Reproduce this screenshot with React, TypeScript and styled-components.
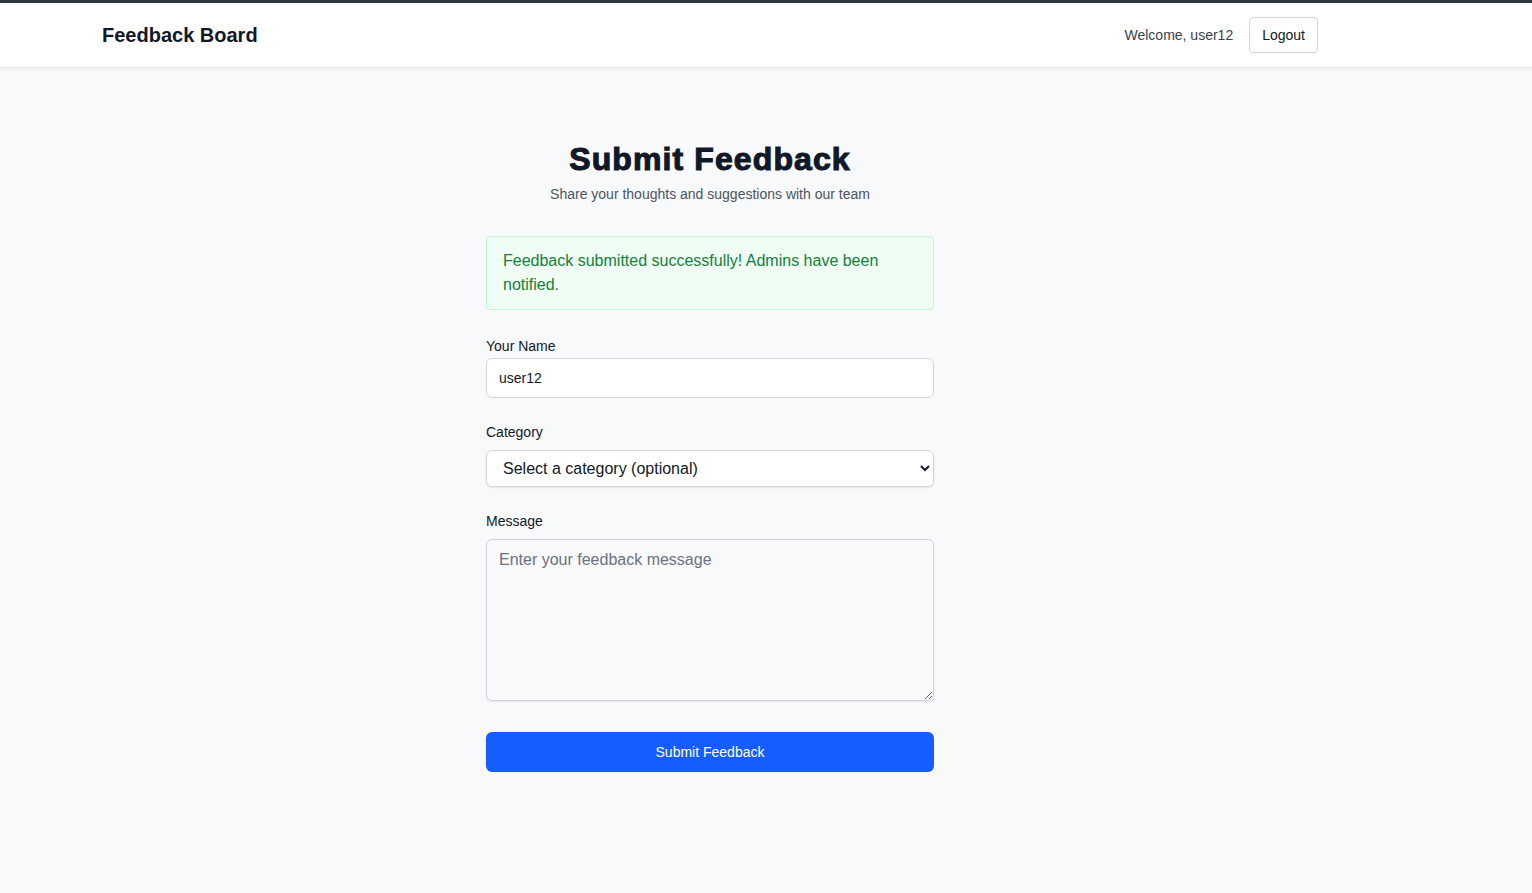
import React from "react";
import styled, { createGlobalStyle } from "styled-components";

const GlobalStyle = createGlobalStyle`
  html, body { margin: 0; padding: 0; }
  body {
    background: #f8f9fb;
    font-family: "Liberation Sans", Arial, sans-serif;
    color: #111827;
  }
  * { box-sizing: border-box; }
`;

const Page = styled.div`
  min-height: 893px;
  background: #f8f9fb;
  border-top: 3px solid #2b3a42;
`;

const Header = styled.header`
  background: #ffffff;
  border-bottom: 1px solid #e5e7eb;
  box-shadow: 0 1px 3px rgba(0, 0, 0, 0.07);
`;

const Frame = styled.div`
  width: 1420px;
`;

const HeaderInner = styled.div`
  width: 1216px;
  margin: 0 auto;
  height: 64px;
  display: flex;
  align-items: center;
  justify-content: space-between;
`;

const Brand = styled.div`
  font-size: 20px;
  font-weight: 700;
  color: #111827;
`;

const UserArea = styled.div`
  display: flex;
  align-items: center;
  gap: 16px;
`;

const Welcome = styled.span`
  font-size: 14px;
  color: #374151;
`;

const OutlineButton = styled.button`
  font-family: inherit;
  font-size: 14px;
  color: #111827;
  background: #ffffff;
  border: 1px solid #d1d5db;
  border-radius: 4px;
  height: 36px;
  padding: 0 12px;
  cursor: pointer;
`;

const Main = styled.main`
  padding-top: 72px;
`;

const FormWrap = styled.div`
  width: 448px;
  margin: 0 auto;
`;

const Intro = styled.div`
  text-align: center;
  margin-bottom: 34px;
`;

const Title = styled.h1`
  margin: 0;
  font-size: 32px;
  line-height: 38px;
  font-weight: 900;
  color: #111827;
  -webkit-text-stroke: 1.1px #111827;
  letter-spacing: 1.1px;
`;

const Subtitle = styled.p`
  margin: 8px 0 0;
  font-size: 14px;
  line-height: 16px;
  color: #4b5563;
`;

const Alert = styled.div`
  background: #effdf4;
  border: 1px solid #bbf7d0;
  border-radius: 4px;
  padding: 12px 16px;
  font-size: 16px;
  line-height: 24px;
  color: #15803d;
  margin-bottom: 28px;
`;

const Field = styled.div<{ $gap: number }>`
  margin-bottom: ${(p) => p.$gap}px;
`;

const Label = styled.label<{ $space: number }>`
  display: block;
  font-size: 14px;
  line-height: 16px;
  color: #111827;
  margin-bottom: ${(p) => p.$space}px;
`;

const TextInput = styled.input`
  display: block;
  width: 100%;
  height: 40px;
  padding: 0 12px;
  font-family: inherit;
  font-size: 14px;
  color: #111827;
  background: #ffffff;
  border: 1px solid #d1d5db;
  border-radius: 6px;
  outline: none;
`;

const Select = styled.select`
  display: block;
  width: 100%;
  height: 37px;
  padding: 0 8px 0 12px;
  font-family: inherit;
  font-size: 16px;
  color: #111827;
  background: #ffffff;
  border: 1px solid #d1d5db;
  border-radius: 6px;
  box-shadow: 0 1px 2px rgba(0, 0, 0, 0.08);
  outline: none;
`;

const TextArea = styled.textarea`
  display: block;
  width: 100%;
  height: 162px;
  padding: 8px 12px;
  font-family: inherit;
  font-size: 16px;
  line-height: 24px;
  color: #111827;
  background: #f8f9fb;
  border: 1px solid #d1d5db;
  border-radius: 6px;
  box-shadow: 0 1px 2px rgba(0, 0, 0, 0.08);
  outline: none;
  resize: vertical;
  &::placeholder { color: #6b7280; }
`;

const PrimaryButton = styled.button`
  display: block;
  width: 100%;
  height: 40px;
  font-family: inherit;
  font-size: 14px;
  color: #ffffff;
  background: #165dff;
  border: none;
  border-radius: 6px;
  cursor: pointer;
`;

export default function App() {
  return (
    <>
      <GlobalStyle />
      <Page>
        <Header>
          <Frame>
            <HeaderInner>
              <Brand>Feedback Board</Brand>
              <UserArea>
                <Welcome>Welcome, user12</Welcome>
                <OutlineButton>Logout</OutlineButton>
              </UserArea>
            </HeaderInner>
          </Frame>
        </Header>
        <Frame>
          <Main>
            <FormWrap>
              <Intro>
                <Title>Submit Feedback</Title>
                <Subtitle>Share your thoughts and suggestions with our team</Subtitle>
              </Intro>
              <Alert>Feedback submitted successfully! Admins have been notified.</Alert>
              <Field $gap={26}>
                <Label $space={4}>Your Name</Label>
                <TextInput defaultValue="user12" />
              </Field>
              <Field $gap={26}>
                <Label $space={10}>Category</Label>
                <Select defaultValue="">
                  <option value="">Select a category (optional)</option>
                  <option value="bug">Bug</option>
                  <option value="feature">Feature</option>
                </Select>
              </Field>
              <Field $gap={31}>
                <Label $space={10}>Message</Label>
                <TextArea placeholder="Enter your feedback message" />
              </Field>
              <PrimaryButton>Submit Feedback</PrimaryButton>
            </FormWrap>
          </Main>
        </Frame>
      </Page>
    </>
  );
}
